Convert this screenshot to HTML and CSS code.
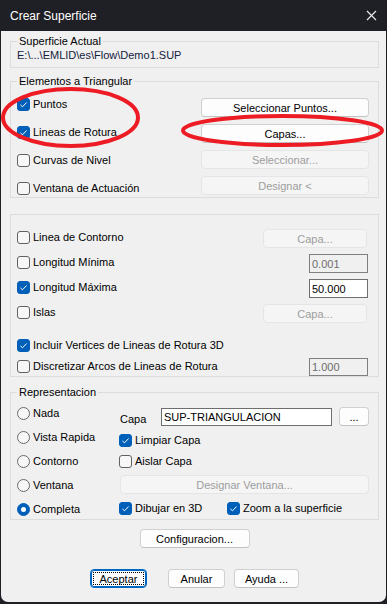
FILE: index.html
```html
<!DOCTYPE html>
<html lang="es">
<head>
  <meta charset="UTF-8">
  <meta name="viewport" content="width=device-width, initial-scale=1.0">
  <title>Crear Superficie</title>
  <link rel="stylesheet" href="styles.css">
</head>
<body>
<div class="window">
  <div class="titlebar">
    <span class="title">Crear Superficie</span>
    <svg class="close" width="11" height="11" viewBox="0 0 11 11"><path d="M1 1L10 10M10 1L1 10"/></svg>
  </div>

  <div class="client">
    <fieldset class="group group-current">
      <legend>Superficie Actual</legend>
      <div class="path">E:\...\EMLID\es\Flow\Demo1.SUP</div>
    </fieldset>

    <fieldset class="group group-elements">
      <legend>Elementos a Triangular</legend>
      <div class="check-col">
        <label class="check"><span class="box on"><svg viewBox="0 0 13 13"><path d="M3.4 6.9L5.5 8.8L9.6 4.5"/></svg></span>Puntos</label>
        <label class="check"><span class="box on"><svg viewBox="0 0 13 13"><path d="M3.4 6.9L5.5 8.8L9.6 4.5"/></svg></span>Lineas de Rotura</label>
        <label class="check"><span class="box"></span>Curvas de Nivel</label>
        <label class="check"><span class="box"></span>Ventana de Actuación</label>
      </div>
      <div class="btn-col">
        <button class="btn">Seleccionar Puntos...</button>
        <button class="btn">Capas...</button>
        <button class="btn" disabled>Seleccionar...</button>
        <button class="btn" disabled>Designar &lt;</button>
      </div>
    </fieldset>

    <fieldset class="group group-options">
      <div class="opt-row">
        <label class="check"><span class="box"></span>Linea de Contorno</label>
        <button class="btn btn-capa" disabled>Capa...</button>
      </div>
      <div class="opt-row">
        <label class="check"><span class="box"></span>Longitud Mínima</label>
        <input class="field field-num" type="text" value="0.001" disabled>
      </div>
      <div class="opt-row">
        <label class="check"><span class="box on"><svg viewBox="0 0 13 13"><path d="M3.4 6.9L5.5 8.8L9.6 4.5"/></svg></span>Longitud Máxima</label>
        <input class="field field-num" type="text" value="50.000">
      </div>
      <div class="opt-row">
        <label class="check"><span class="box"></span>Islas</label>
        <button class="btn btn-capa" disabled>Capa...</button>
      </div>
      <div class="opt-row opt-solo">
        <label class="check"><span class="box on"><svg viewBox="0 0 13 13"><path d="M3.4 6.9L5.5 8.8L9.6 4.5"/></svg></span>Incluir Vertices de Lineas de Rotura 3D</label>
      </div>
      <div class="opt-row opt-last">
        <label class="check"><span class="box"></span>Discretizar Arcos de Lineas de Rotura</label>
        <input class="field field-num" type="text" value="1.000" disabled>
      </div>
    </fieldset>

    <fieldset class="group group-repr">
      <legend>Representacion</legend>
      <div class="radio-col">
        <label class="check"><span class="radio"></span>Nada</label>
        <label class="check"><span class="radio"></span>Vista Rapida</label>
        <label class="check"><span class="radio"></span>Contorno</label>
        <label class="check"><span class="radio"></span>Ventana</label>
        <label class="check"><span class="radio on"></span>Completa</label>
      </div>
      <div class="repr-col">
        <div class="layer-row">
          <span class="layer-label">Capa</span>
          <input class="field field-layer" type="text" value="SUP-TRIANGULACION">
          <button class="btn btn-dots">...</button>
        </div>
        <label class="check"><span class="box on"><svg viewBox="0 0 13 13"><path d="M3.4 6.9L5.5 8.8L9.6 4.5"/></svg></span>Limpiar Capa</label>
        <label class="check"><span class="box"></span>Aislar Capa</label>
        <button class="btn" disabled>Designar Ventana...</button>
        <div class="draw-row">
          <label class="check check-3d"><span class="box on"><svg viewBox="0 0 13 13"><path d="M3.4 6.9L5.5 8.8L9.6 4.5"/></svg></span>Dibujar en 3D</label>
          <label class="check"><span class="box on"><svg viewBox="0 0 13 13"><path d="M3.4 6.9L5.5 8.8L9.6 4.5"/></svg></span>Zoom a la superficie</label>
        </div>
      </div>
    </fieldset>

    <button class="btn btn-config">Configuracion...</button>

    <div class="actions">
      <button class="btn btn-ok">Aceptar</button>
      <button class="btn btn-cancel">Anular</button>
      <button class="btn btn-help">Ayuda ...</button>
    </div>
  </div>

  <!-- marcas rojas dibujadas encima de la captura -->
  <svg class="marks" width="387" height="604" viewBox="0 0 387 604">
    <ellipse cx="70.5" cy="117.5" rx="67.5" ry="28.5"/>
    <ellipse cx="282.5" cy="130.5" rx="99.5" ry="14.5"/>
  </svg>
</div>
</body>
</html>
```

FILE: styles.css
```css
* {
  box-sizing: border-box;
}

body {
  margin: 0;
  background: #1f2025;
  font-family: "Liberation Sans", Arial, sans-serif;
  font-size: 11px;
  color: #000;
}

.window {
  position: relative;
  width: 387px;
  height: 604px;
}

.titlebar {
  height: 31px;
  display: flex;
  align-items: center;
  justify-content: space-between;
  padding: 0 10px 0 10px;
  color: #fff;
  font-size: 12px;
}

.close {
  stroke: #e8e8e8;
  stroke-width: 1.2;
}

.client {
  margin: 0 1px;
  height: 571px;
  background: #f0f0f0;
  border-radius: 0 0 7px 7px;
  padding: 3px 7px 0 9px;
  display: flex;
  flex-direction: column;
}

.group {
  margin: 0;
  min-width: 0;
  border: 1px solid #dcdcdc;
  padding: 0 9px 2px 6px;
}

.group legend {
  padding: 0 2px;
  line-height: 14px;
}

.path {
  line-height: 14px;
  color: #14213d;
}

.group-current {
  padding-bottom: 5px;
}

.group-elements {
  margin-top: 6px;
  padding-top: 9px;
  display: flex;
  justify-content: space-between;
}

.check-col {
  display: flex;
  flex-direction: column;
  gap: 14px;
}

.btn-col {
  margin-top: 1px;
  width: 168px;
  display: flex;
  flex-direction: column;
  gap: 7px;
}

.check {
  display: flex;
  align-items: center;
  gap: 3px;
  height: 14px;
  white-space: nowrap;
}

.box {
  width: 13px;
  height: 13px;
  border: 1px solid #616161;
  border-radius: 3px;
  background: #f7f7f7;
  flex: none;
}

.box.on {
  background: #005fb8;
  border-color: #005fb8;
}

.box svg {
  display: block;
  width: 13px;
  height: 13px;
  margin: -1px;
  fill: none;
  stroke: #fff;
  stroke-width: 1;
}

.radio {
  width: 13px;
  height: 13px;
  border: 1px solid #6a6a6a;
  border-radius: 50%;
  background: #f7f7f7;
  flex: none;
}

.radio.on {
  background: #005fb8;
  border-color: #005fb8;
  display: flex;
  align-items: center;
  justify-content: center;
}

.radio.on::after {
  content: "";
  width: 5px;
  height: 5px;
  border-radius: 50%;
  background: #fff;
}

.btn {
  height: 19px;
  padding: 0 4px;
  border: 1px solid #d0d0d0;
  border-bottom-color: #c2c2c2;
  border-radius: 4px;
  background: #fdfdfd;
  font-family: inherit;
  font-size: 11px;
  color: #000;
  white-space: nowrap;
}

.btn:disabled {
  background: #f5f5f5;
  border-color: #e5e5e5;
  color: #9d9d9d;
}

.field {
  height: 19px;
  padding: 0 2px;
  border: 1px solid #6e6e6e;
  background: #fff;
  font-family: inherit;
  font-size: 11px;
  color: #000;
}

.field:disabled {
  background: #f0f0f0;
  border-color: #7f7f7f;
  color: #6d6d6d;
}

.group-options {
  margin-top: 16px;
  padding-top: 14px;
  padding-bottom: 0;
  display: flex;
  flex-direction: column;
  gap: 6px;
}

.opt-row {
  height: 19px;
  display: flex;
  align-items: flex-start;
  justify-content: space-between;
}

.opt-row .check {
  margin-top: 1px;
}

.opt-solo {
  height: 14px;
  margin-top: 9px;
}

.opt-solo .check {
  margin-top: 0;
}

.opt-last {
  height: 18px;
}

.opt-last .field {
  height: 18px;
}

.btn-capa {
  width: 104px;
  margin-right: 2px;
}

.field-num {
  width: 59px;
  margin-right: 1px;
}

.group-repr {
  margin-top: 8px;
  padding-bottom: 3px;
  display: flex;
  justify-content: space-between;
}

.radio-col {
  padding-top: 7px;
  display: flex;
  flex-direction: column;
  gap: 10px;
}

.repr-col {
  width: 250px;
  padding-top: 8px;
  display: flex;
  flex-direction: column;
  gap: 7px;
}

.layer-row {
  display: flex;
  align-items: center;
  height: 19px;
}

.layer-label {
  width: 42px;
  padding-left: 1px;
  margin-top: 4px;
}

.field-layer {
  width: 171px;
  height: 18px;
}

.btn-dots {
  width: 30px;
  margin-left: 7px;
}

.repr-col .btn:disabled {
  margin-left: 1px;
}

.draw-row {
  display: flex;
}

.check-3d {
  width: 108px;
}

.btn-config {
  align-self: center;
  width: 110px;
  margin-top: 9px;
}

.actions {
  margin-top: 21px;
  display: flex;
  justify-content: center;
}

.btn-ok {
  position: relative;
  width: 57px;
  border: 1px solid #0067c0;
  box-shadow: inset 0 0 0 1px #0067c0;
}

.btn-ok::after {
  content: "";
  position: absolute;
  inset: 2px;
  border: 1px dotted #000;
}

.btn-cancel {
  width: 57px;
  margin-left: 21px;
}

.btn-help {
  width: 65px;
  margin-left: 9px;
}

.marks {
  position: absolute;
  top: 0;
  left: 0;
  pointer-events: none;
  fill: none;
  stroke: #ed1c24;
  stroke-width: 4;
}
```
